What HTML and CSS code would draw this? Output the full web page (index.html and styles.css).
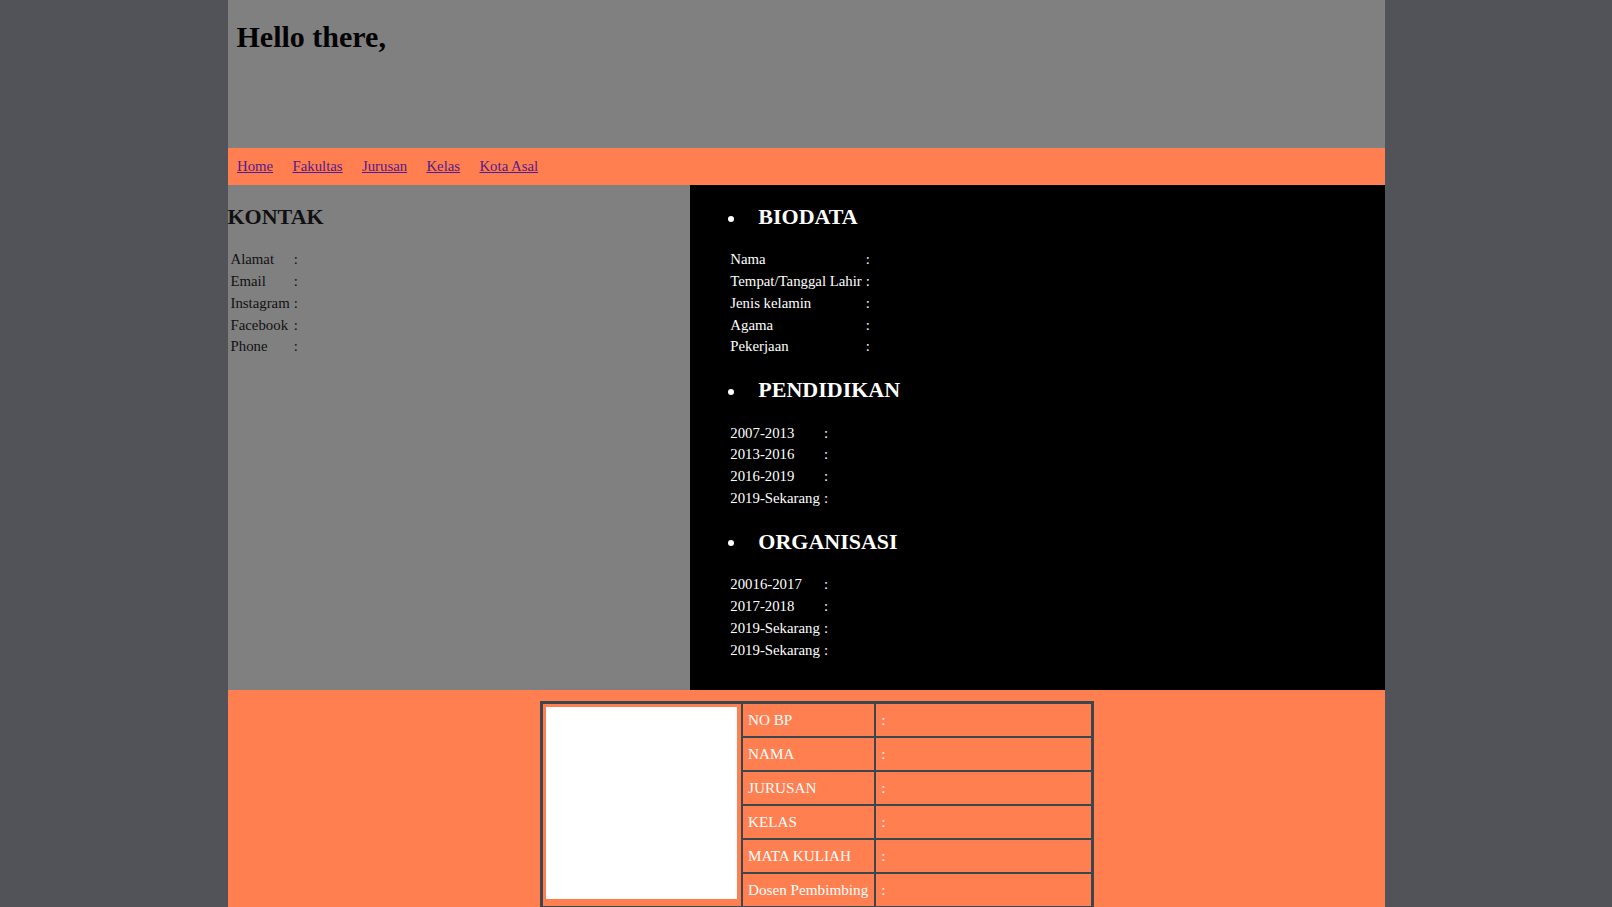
FILE: index.html
```html
<!DOCTYPE html>
<html>
<head>
<meta charset="utf-8">
<title>Biodata</title>
<link rel="stylesheet" href="styles.css">
</head>
<body>
<div class="page">
  <header class="header">
    <h1 class="title">Hello there,</h1>
  </header>
  <nav class="nav">
    <a href="#">Home</a>
    <a href="#">Fakultas</a>
    <a href="#">Jurusan</a>
    <a href="#">Kelas</a>
    <a href="#">Kota Asal</a>
  </nav>
  <main class="main">
    <section class="kontak">
      <h2 class="sec-title">KONTAK</h2>
      <table class="info">
        <tr><td>Alamat</td><td>:</td></tr>
        <tr><td>Email</td><td>:</td></tr>
        <tr><td>Instagram</td><td>:</td></tr>
        <tr><td>Facebook</td><td>:</td></tr>
        <tr><td>Phone</td><td>:</td></tr>
      </table>
    </section>
    <section class="bio">
      <h2 class="sec-title bullet">BIODATA</h2>
      <table class="info">
        <tr><td>Nama</td><td>:</td></tr>
        <tr><td>Tempat/Tanggal Lahir</td><td>:</td></tr>
        <tr><td>Jenis kelamin</td><td>:</td></tr>
        <tr><td>Agama</td><td>:</td></tr>
        <tr><td>Pekerjaan</td><td>:</td></tr>
      </table>
      <h2 class="sec-title bullet">PENDIDIKAN</h2>
      <table class="info">
        <tr><td>2007-2013</td><td>:</td></tr>
        <tr><td>2013-2016</td><td>:</td></tr>
        <tr><td>2016-2019</td><td>:</td></tr>
        <tr><td>2019-Sekarang</td><td>:</td></tr>
      </table>
      <h2 class="sec-title bullet">ORGANISASI</h2>
      <table class="info">
        <tr><td>20016-2017</td><td>:</td></tr>
        <tr><td>2017-2018</td><td>:</td></tr>
        <tr><td>2019-Sekarang</td><td>:</td></tr>
        <tr><td>2019-Sekarang</td><td>:</td></tr>
      </table>
    </section>
  </main>
  <footer class="footer">
    <table class="card">
      <tr><td class="photo" rowspan="6"><div class="pic"></div></td><td class="lbl">NO BP</td><td class="val">:</td></tr>
      <tr><td class="lbl">NAMA</td><td class="val">:</td></tr>
      <tr><td class="lbl">JURUSAN</td><td class="val">:</td></tr>
      <tr><td class="lbl">KELAS</td><td class="val">:</td></tr>
      <tr><td class="lbl">MATA KULIAH</td><td class="val">:</td></tr>
      <tr><td class="lbl">Dosen Pembimbing</td><td class="val">:</td></tr>
    </table>
  </footer>
</div>
</body>
</html>
```
FILE: styles.css
```css
html, body {
  margin: 0;
  padding: 0;
}
body {
  background: #525358;
  font-family: "Liberation Serif", "Times New Roman", serif;
  font-size: 14.8px;
}
.page {
  width: 1157px;
  margin: 0 auto;
}
.header {
  background: #808080;
  height: 148px;
  overflow: hidden;
}
.title {
  margin: 20px 0 0 9px;
  font-size: 30px;
  line-height: normal;
  color: #000;
}
.nav {
  background: #ff7f50;
  height: 37px;
  display: flex;
  align-items: center;
  gap: 19.3px;
  padding-left: 9.5px;
}
.nav a {
  color: #551a8b;
  font-size: 14.8px;
}
.main {
  display: flex;
}
.kontak {
  width: 40%;
  background: #808080;
  color: #111;
}
.bio {
  flex: 1;
  background: #000;
  color: #fff;
  padding: 0 0 28px 37px;
}
.sec-title {
  font-size: 22px;
  line-height: normal;
  margin: 18.2px 0;
}
.kontak .sec-title,
.bio .sec-title:first-child {
  margin-top: 19px;
}
.bullet {
  display: flex;
  align-items: center;
}
.bullet::before {
  content: "";
  width: 6px;
  height: 6px;
  border-radius: 50%;
  background: #fff;
  margin: 3px 24px 0 1px;
}
.info {
  border-spacing: 2px;
  font-size: 14.8px;
  line-height: 17.8px;
}
.info td {
  padding: 1px;
}
.footer {
  background: #ff7f50;
  padding: 11px 0 20px 312.5px;
}
.card {
  border-collapse: collapse;
  border: 3px solid #3b474c;
  color: #fff;
  font-size: 15.2px;
  line-height: 18px;
}
.card td {
  border: 2px solid #3b474c;
  padding: 7px 6px 7px 5px;
  white-space: nowrap;
}
.card td.photo {
  padding: 3px 4px 3px 3px;
  vertical-align: top;
}
.pic {
  width: 191px;
  height: 192px;
  background: #fff;
}
.card td.val {
  width: 204px;
  padding-left: 5px;
}
```
